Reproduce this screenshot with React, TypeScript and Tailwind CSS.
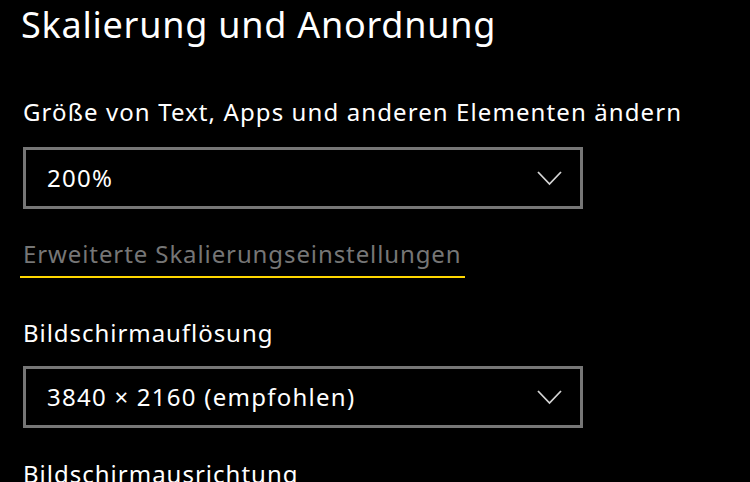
import React from "react";

function Chevron() {
  return (
    <svg width="25" height="15" viewBox="0 0 25 15" className="shrink-0">
      <polyline points="1,1 12.5,13 24,1" fill="none" stroke="#d4d4d4" strokeWidth="1.8" />
    </svg>
  );
}

function Dropdown({ value }: { value: string }) {
  return (
    <div className="flex h-[62px] w-[560px] items-center justify-between border-[3px] border-[#767676] pl-[21px] pr-[18px]">
      <span className="text-[24px] leading-[32px] tracking-[1.25px] text-white">{value}</span>
      <Chevron />
    </div>
  );
}

export default function App() {
  return (
    <div
      className="h-[482px] w-[750px] overflow-hidden bg-black pl-[23px] text-white"
      style={{ fontFamily: '"Noto Sans", "Open Sans", sans-serif' }}
    >
      <div className="-ml-[2px] pt-[1px] text-[36px] leading-[48px] tracking-[0.75px] text-white">Skalierung und Anordnung</div>
      <div className="mt-[47px] text-[24px] leading-[32px] tracking-[1.1px]">Größe von Text, Apps und anderen Elementen ändern</div>
      <div className="mt-[19px]">
        <Dropdown value="200%" />
      </div>
      <div className="mt-[29px]">
        <span className="-ml-[3px] inline-block border-b-2 border-[#ffd700] px-[3px] pb-[6px] text-[24px] leading-[32px] tracking-[0.9px] text-[#767676]">
          Erweiterte Skalierungseinstellungen
        </span>
      </div>
      <div className="mt-[39px] text-[24px] leading-[32px] tracking-[0.95px]">Bildschirmauflösung</div>
      <div className="mt-[17px]">
        <Dropdown value="3840 × 2160 (empfohlen)" />
      </div>
      <div className="mt-[30px] text-[24px] leading-[32px] tracking-[1px]">Bildschirmausrichtung</div>
    </div>
  );
}
